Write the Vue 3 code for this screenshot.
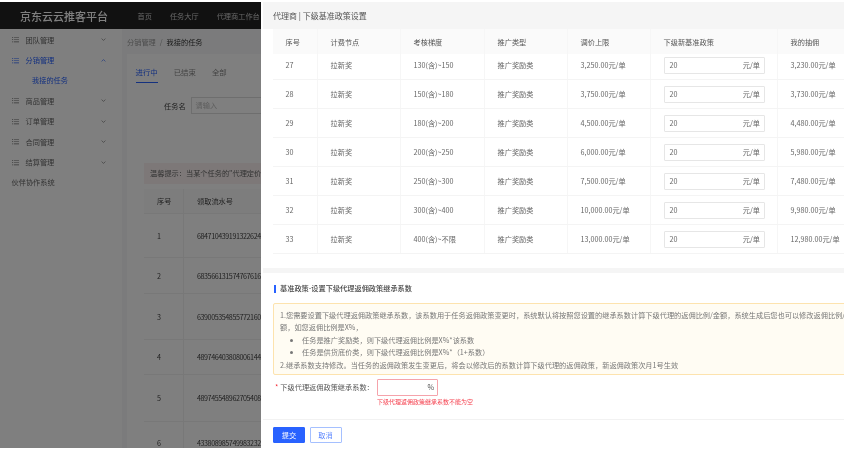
<template>
  <div class="page">
    <!-- 底层页面 -->
    <div class="app">
      <header class="topbar">
        <div class="logo">京东云云推客平台</div>
        <nav class="topnav">
          <a v-for="item in topNav" :key="item">{{ item }}</a>
        </nav>
      </header>
      <div class="main">
        <aside class="sidebar">
          <template v-for="menu in menus" :key="menu.name">
            <div class="menu-item" :class="{ active: menu.open }">
              <svg class="menu-icon" viewBox="0 0 8 8" fill="currentColor">
                <path d="M0 1h1v1H0zM2 1h6v.8H2zM0 3.6h1v1H0zM2 3.6h6v.8H2zM0 6.2h1v1H0zM2 6.2h6V7H2z" />
              </svg>
              <span>{{ menu.name }}</span>
              <svg class="menu-arrow" viewBox="0 0 8 8" fill="none" stroke="currentColor" stroke-width="1">
                <path :d="menu.open ? 'M1 5.5 4 2.5 7 5.5' : 'M1 2.5 4 5.5 7 2.5'" />
              </svg>
            </div>
            <div v-if="menu.open" class="menu-sub">我接的任务</div>
          </template>
          <div class="menu-plain">伙伴协作系统</div>
        </aside>
        <section class="content">
          <div class="breadcrumb"><span>分销管理</span><i>/</i><b>我接的任务</b></div>
          <div class="card">
            <div class="tabs">
              <span class="tab current">进行中</span>
              <span class="tab">已结束</span>
              <span class="tab">全部</span>
            </div>
            <div class="filter">
              <label>任务名</label>
              <div class="fake-input">请输入</div>
            </div>
            <div class="notice">温馨提示：当某个任务的"代理定价权"发生变更时</div>
            <div class="task-table">
              <div class="task-row task-head">
                <div>序号</div>
                <div>领取流水号</div>
              </div>
              <div
                v-for="task in tasks"
                :key="task.no"
                class="task-row"
                :style="{ height: task.h + 'px' }"
              >
                <div>{{ task.no }}</div>
                <div>{{ task.code }}</div>
              </div>
            </div>
          </div>
        </section>
      </div>
    </div>
    <div class="mask"></div>

    <!-- 抽屉 -->
    <aside class="drawer">
      <div class="drawer-title">代理商 | 下级基准政策设置</div>
      <div class="policy-wrap">
        <div class="policy-row policy-head">
          <div v-for="col in columns" :key="col">{{ col }}</div>
        </div>
        <div v-for="row in rows" :key="row.no" class="policy-row">
          <div>{{ row.no }}</div>
          <div>拉新奖</div>
          <div>{{ row.range }}</div>
          <div>推广奖励类</div>
          <div>{{ row.limit }}元/单</div>
          <div>
            <div class="unit-input"><span>20</span><span>元/单</span></div>
          </div>
          <div>{{ row.mine }}元/单</div>
        </div>
      </div>
      <div class="gap"></div>
      <div class="inherit">
        <h3 class="section-title">基准政策-设置下级代理返佣政策继承系数</h3>
        <div class="tips">
          <p>1.您需要设置下级代理返佣政策继承系数，该系数用于任务返佣政策变更时，系统默认将按照您设置的继承系数计算下级代理的返佣比例/金额，系统生成后您也可以修改返佣比例/金</p>
          <p>额，如您返佣比例是X%，</p>
          <ul>
            <li>任务是推广奖励类，则下级代理返佣比例是X%*该系数</li>
            <li>任务是供货底价类，则下级代理返佣比例是X%*（1+系数）</li>
          </ul>
          <p>2.继承系数支持修改。当任务的返佣政策发生变更后，将会以修改后的系数计算下级代理的返佣政策，新返佣政策次月1号生效</p>
        </div>
        <div class="form-row">
          <label class="form-label"><em>*</em>下级代理返佣政策继承系数：</label>
          <div>
            <div class="ratio-input">%</div>
            <div class="form-error">下级代理返佣政策继承系数不能为空</div>
          </div>
        </div>
      </div>
      <footer class="drawer-footer">
        <button class="btn primary">提交</button>
        <button class="btn">取消</button>
      </footer>
    </aside>
  </div>
</template>

<script setup>
const topNav = ['首页', '任务大厅', '代理商工作台']

const menus = [
  { name: '团队管理' },
  { name: '分销管理', open: true },
  { name: '商品管理' },
  { name: '订单管理' },
  { name: '合同管理' },
  { name: '结算管理' }
]

const tasks = [
  { no: 1, code: '684710439191322624', h: 44 },
  { no: 2, code: '683566131574767616', h: 36 },
  { no: 3, code: '639005354855772160', h: 46 },
  { no: 4, code: '489746403808006144', h: 35 },
  { no: 5, code: '489745548962705408', h: 47 },
  { no: 6, code: '433808985749983232', h: 42 }
]

const columns = ['序号', '计费节点', '考核梯度', '推广类型', '调价上限', '下级新基准政策', '我的抽佣']

const rows = [
  { no: 27, range: '130(含)~150', limit: '3,250.00', mine: '3,230.00' },
  { no: 28, range: '150(含)~180', limit: '3,750.00', mine: '3,730.00' },
  { no: 29, range: '180(含)~200', limit: '4,500.00', mine: '4,480.00' },
  { no: 30, range: '200(含)~250', limit: '6,000.00', mine: '5,980.00' },
  { no: 31, range: '250(含)~300', limit: '7,500.00', mine: '7,480.00' },
  { no: 32, range: '300(含)~400', limit: '10,000.00', mine: '9,980.00' },
  { no: 33, range: '400(含)~不限', limit: '13,000.00', mine: '12,980.00' }
]
</script>

<style>
html,
body {
  background: #fff;
}
</style>

<style scoped>
.page {
  position: relative;
  width: 844px;
  height: 446px;
  margin-top: 2px;
  overflow: hidden;
  font-family: "Noto Sans CJK SC", sans-serif;
  font-size: 7.2px;
  color: #666;
}

.page div,
.page aside,
.page section,
.page header,
.page footer {
  box-sizing: border-box;
}

.app {
  height: 100%;
  display: flex;
  flex-direction: column;
  background: #fff;
  filter: blur(0.5px);
}

.mask {
  position: absolute;
  inset: 0;
  background: rgba(0, 0, 0, 0.5);
}

.topbar {
  height: 27px;
  flex: none;
  display: flex;
  align-items: center;
  padding-left: 20px;
  background: #222;
}

.logo {
  width: 117.5px;
  font-size: 11px;
  font-weight: 500;
  color: #fff;
}

.topnav {
  display: flex;
  gap: 18px;
  white-space: nowrap;
  color: #ccc;
}

.main {
  flex: 1;
  display: flex;
  min-height: 0;
}

.sidebar {
  width: 122px;
  flex: none;
  padding-top: 0.5px;
  color: #666;
}

.menu-item,
.menu-sub,
.menu-plain {
  height: 20.4px;
  display: flex;
  align-items: center;
}

.menu-item {
  padding-left: 12px;
}

.menu-item.active {
  color: #2962ff;
}

.menu-icon {
  width: 7px;
  height: 7px;
  margin-right: 6.5px;
}

.menu-arrow {
  width: 5px;
  height: 5px;
  margin-left: 47px;
}

.menu-sub {
  padding-left: 32px;
  color: #2962ff;
}

.menu-plain {
  padding-left: 11.5px;
}

.content {
  flex: 1;
  min-width: 0;
  padding: 0 0 0 5px;
  background: #f6f7f8;
}

.breadcrumb {
  height: 25px;
  display: flex;
  align-items: center;
  gap: 4px;
  color: #999;
}

.breadcrumb i {
  font-style: normal;
}

.breadcrumb b {
  font-weight: 400;
  color: #333;
}

.card {
  height: 394px;
  padding: 0 0 0 17px;
  background: #fff;
  overflow: hidden;
}

.tabs {
  display: flex;
  gap: 16px;
  margin: 6px 0 0 -8.5px;
  height: 22px;
}

.tab {
  display: flex;
  align-items: center;
  height: 22px;
  border-bottom: 1px solid transparent;
  color: #888;
  font-size: 7.4px;
}

.tab.current {
  color: #2962ff;
  border-bottom-color: #2962ff;
}

.filter {
  display: flex;
  align-items: center;
  gap: 5px;
  margin: 15px 0 0 20px;
}

.filter label {
  color: #444;
}

.fake-input {
  width: 90px;
  height: 17px;
  line-height: 15px;
  padding-left: 4px;
  border: 1px solid #ddd;
  color: #bbb;
  flex: none;
}

.notice {
  height: 21px;
  line-height: 21px;
  margin-top: 49px;
  padding-left: 6px;
  white-space: nowrap;
  background: #faf1f0;
  color: #666;
}

.task-table {
  margin-top: 5px;
  color: #444;
}

.task-row {
  display: grid;
  grid-template-columns: 40px 100px;
  border-bottom: 1px solid #f0f0f0;
  white-space: nowrap;
  letter-spacing: -0.45px;
}

.task-row > div {
  display: flex;
  align-items: center;
  padding-left: 13px;
  border-right: 1px solid #f0f0f0;
}

.task-head {
  height: 25px;
  background: #fafafa;
  letter-spacing: 0;
}

.drawer {
  position: absolute;
  top: 0;
  right: 0;
  bottom: 0;
  width: 583px;
  padding-left: 2px;
  display: flex;
  flex-direction: column;
  background: #fff;
  overflow: hidden;
  filter: blur(0.3px);
}

.drawer-title {
  height: 27px;
  line-height: 27px;
  flex: none;
  padding-left: 10px;
  font-size: 8px;
  color: #555;
  background: #f5f5f5;
}

.policy-wrap {
  padding-left: 10px;
  flex: none;
  white-space: nowrap;
}

.policy-row {
  display: grid;
  grid-template-columns: 45px 83px 84px 83px 83px 127px 70px;
  height: 29px;
  border-bottom: 1px solid #f4f4f4;
}

.policy-row > div {
  display: flex;
  align-items: center;
  padding-left: 12.5px;
  border-right: 1px solid #f6f6f6;
}

.policy-row > div:last-child {
  border-right: 0;
}

.policy-head {
  position: relative;
  z-index: 1;
  height: 25px;
  background: #fafafa;
  border-bottom: 0;
  color: #555;
}

/* 表头固定，第一行被盖住一点 */
.policy-head + .policy-row {
  margin-top: -3px;
}

.unit-input {
  width: 101px;
  height: 17px;
  flex: none;
  display: flex;
  align-items: center;
  justify-content: space-between;
  padding: 0 3.5px 0 5px;
  border: 1px solid #e6e6e6;
  border-radius: 1px;
}

.gap {
  height: 5px;
  margin-top: 14px;
  flex: none;
  background: #f5f5f5;
}

.inherit {
  flex: 1;
  min-height: 0;
  padding: 0 0 0 10px;
}

.section-title {
  position: relative;
  margin: 0;
  height: 30px;
  line-height: 30px;
  padding-left: 7px;
  font-size: 7.2px;
  font-weight: 500;
  color: #444;
  white-space: nowrap;
}

.section-title::before {
  content: "";
  position: absolute;
  left: 1px;
  top: 12px;
  width: 2px;
  height: 8px;
  background: #2962ff;
}

.tips {
  width: 590px;
  height: 72px;
  padding: 5px 0 0 6px;
  border: 1px solid #fde3ae;
  border-radius: 2px;
  background: #fffcf3;
  line-height: 12.4px;
  color: #777;
  white-space: nowrap;
}

.tips p {
  margin: 0;
}

.tips ul {
  margin: 0;
  padding-left: 22px;
}

.form-row {
  display: flex;
  margin-top: 4px;
}

.form-label {
  width: 104px;
  height: 17px;
  line-height: 17px;
  flex: none;
  padding-left: 2px;
  box-sizing: border-box;
  white-space: nowrap;
  color: #555;
}

.form-label em {
  font-style: normal;
  color: #f5222d;
  margin-right: 2px;
}

.ratio-input {
  width: 61px;
  height: 17px;
  line-height: 15px;
  padding-right: 3px;
  border: 1px solid #f5a3ab;
  border-radius: 1px;
  text-align: right;
  color: #555;
}

.form-error {
  margin-top: 0.5px;
  font-size: 6px;
  line-height: 9px;
  color: #f5414f;
  white-space: nowrap;
}

.drawer-footer {
  flex: none;
  display: flex;
  gap: 4.5px;
  height: 29px;
  padding: 7px 0 0 10px;
  border-top: 1px solid #f2f2f2;
}

.btn {
  width: 32px;
  height: 16px;
  padding: 0;
  border: 1px solid #a5c0ff;
  border-radius: 1px;
  background: #fff;
  font: inherit;
  color: #5b86ff;
}

.btn.primary {
  background: #2962ff;
  border-color: #2962ff;
  color: #fff;
}
</style>
